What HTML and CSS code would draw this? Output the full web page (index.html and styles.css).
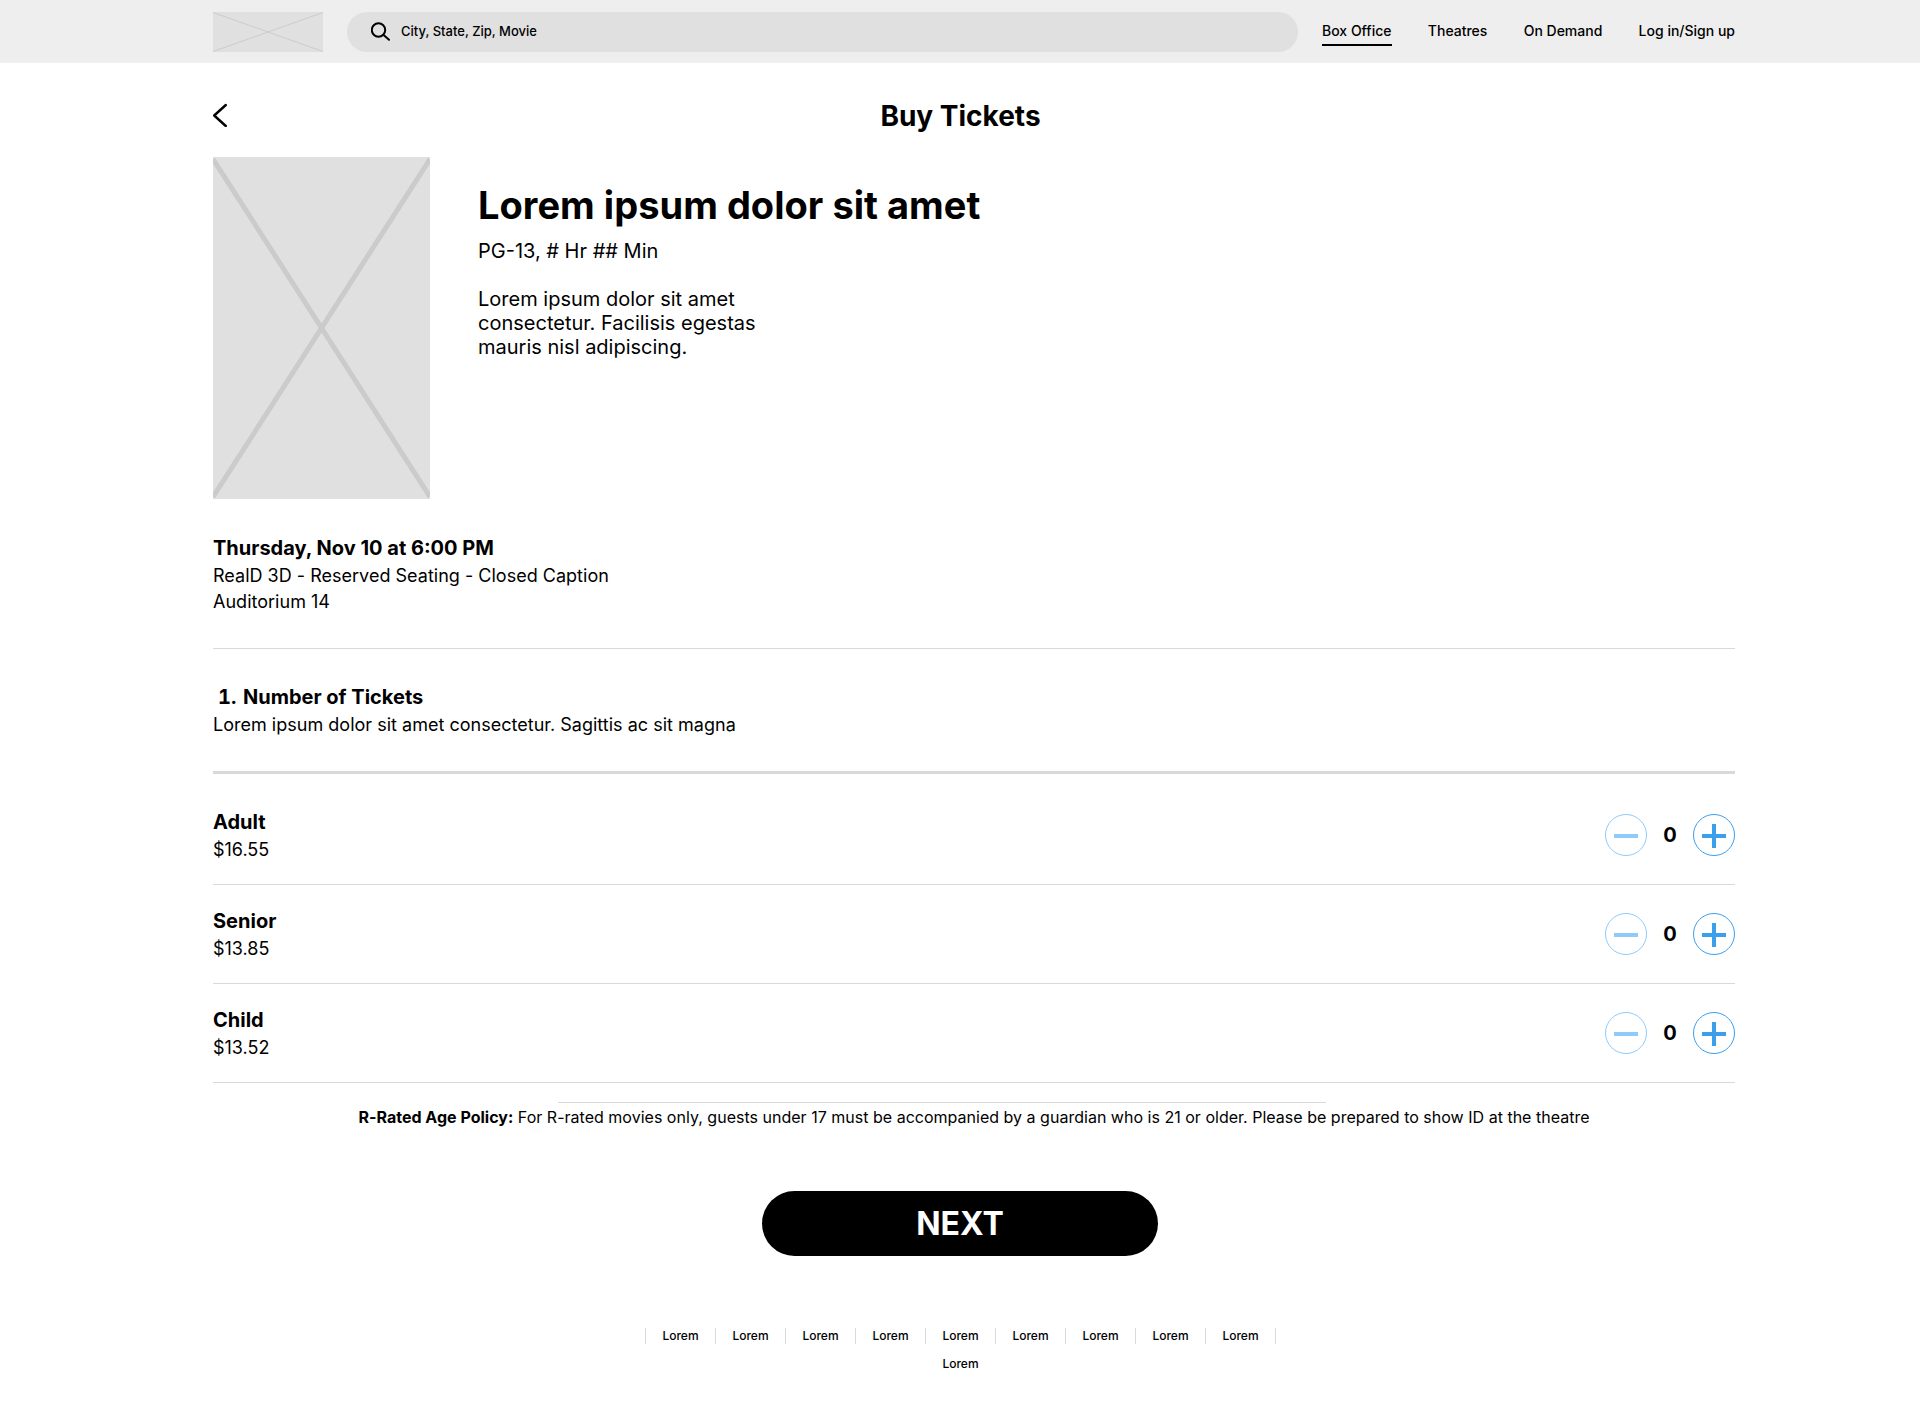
FILE: index.html
```html
<!DOCTYPE html>
<html lang="en">
<head>
<meta charset="utf-8">
<title>Buy Tickets</title>
<link rel="stylesheet" href="styles.css">
</head>
<body>
<header class="topbar">
  <svg class="logo" viewBox="0 0 110 40"><path d="M0 .5L110 39.5M110 .5L0 39.5"/></svg>
  <div class="search">
    <svg class="search-icon" viewBox="0 0 20 20"><circle cx="7.5" cy="8" r="6.7"/><path d="M12.3 12.8L18 17.8"/></svg>
    <span>City, State, Zip, Movie</span>
  </div>
  <nav class="nav">
    <a class="active">Box Office</a><a>Theatres</a><a>On Demand</a><a>Log in/Sign up</a>
  </nav>
</header>
<main class="page">
  <div class="heading">
    <svg class="back" viewBox="0 0 14 24"><path d="M12.8 2L1.2 12.5L12.8 23"/></svg>
    <h1>Buy Tickets</h1>
  </div>
  <section class="movie">
    <svg class="poster" viewBox="0 0 217 342"><path d="M0 2L217 340M217 2L0 340"/></svg>
    <div class="movie-info">
      <h2>Lorem ipsum dolor sit amet</h2>
      <p class="rating">PG-13, # Hr ## Min</p>
      <p class="summary">Lorem ipsum dolor sit amet<br>consectetur. Facilisis egestas<br>mauris nisl adipiscing.</p>
    </div>
  </section>
  <section class="showing">
    <h3>Thursday, Nov 10 at 6:00 PM</h3>
    <p>RealD 3D - Reserved Seating - Closed Caption</p>
    <p>Auditorium 14</p>
  </section>
  <section class="step">
    <h3><span class="step-number">1.</span>Number of Tickets</h3>
    <p>Lorem ipsum dolor sit amet consectetur. Sagittis ac sit magna</p>
  </section>
  <section class="tickets">
    <div class="ticket">
      <div><h3>Adult</h3><p>$16.55</p></div>
      <div class="stepper">
        <svg class="minus" viewBox="0 0 42 42"><circle cx="21" cy="21" r="20.5"/><path d="M9 22H33"/></svg>
        <span>0</span>
        <svg class="plus" viewBox="0 0 42 42"><circle cx="21" cy="21" r="20.5"/><path d="M9 22H33M21 10V34"/></svg>
      </div>
    </div>
    <div class="ticket">
      <div><h3>Senior</h3><p>$13.85</p></div>
      <div class="stepper">
        <svg class="minus" viewBox="0 0 42 42"><circle cx="21" cy="21" r="20.5"/><path d="M9 22H33"/></svg>
        <span>0</span>
        <svg class="plus" viewBox="0 0 42 42"><circle cx="21" cy="21" r="20.5"/><path d="M9 22H33M21 10V34"/></svg>
      </div>
    </div>
    <div class="ticket">
      <div><h3>Child</h3><p>$13.52</p></div>
      <div class="stepper">
        <svg class="minus" viewBox="0 0 42 42"><circle cx="21" cy="21" r="20.5"/><path d="M9 22H33"/></svg>
        <span>0</span>
        <svg class="plus" viewBox="0 0 42 42"><circle cx="21" cy="21" r="20.5"/><path d="M9 22H33M21 10V34"/></svg>
      </div>
    </div>
  </section>
  <div class="short-rule"></div>
  <p class="policy"><b>R-Rated Age Policy:</b> For R-rated movies only, guests under 17 must be accompanied by a guardian who is 21 or older. Please be prepared to show ID at the theatre</p>
</main>
<button class="next">NEXT</button>
<footer class="footer">
  <div class="links">
    <a>Lorem</a><a>Lorem</a><a>Lorem</a><a>Lorem</a><a>Lorem</a><a>Lorem</a><a>Lorem</a><a>Lorem</a><a>Lorem</a>
  </div>
  <a class="last">Lorem</a>
</footer>
</body>
</html>
```
FILE: styles.css
```css
* { box-sizing: border-box; margin: 0; padding: 0; }
body { background: #fff; color: #000; font-family: Inter, sans-serif; width: 1920px; height: 1421px; overflow: hidden; }
svg { display: block; flex: none; fill: none; }

.topbar { height: 63px; background: #eee; padding: 12px 185px 0 213px; display: flex; align-items: flex-start; }
.logo { width: 110px; height: 40px; background: #e0e0e0; stroke: #cbcbcb; }
.search { width: 951px; height: 40px; margin-left: 24px; padding: 0 0 2px 24px; border-radius: 20px; background: #e0e0e0; display: flex; align-items: center; gap: 10px; font-size: 13px; font-weight: 500; }
.search-icon { width: 20px; height: 20px; margin-top: 2px; stroke: #000; stroke-width: 2; stroke-linecap: round; }
.nav { flex: 1; margin-left: 24px; padding-top: 9px; display: flex; justify-content: space-between; font-size: 14px; font-weight: 500; line-height: 20px; white-space: nowrap; }
.nav a { height: 25px; }
.nav .active { border-bottom: 2px solid #000; }

.page { width: 1522px; margin-left: 213px; }
.heading { height: 94px; padding-top: 36px; display: flex; }
.back { width: 14px; height: 24px; margin-top: 4px; stroke: #000; stroke-width: 2.4; stroke-linecap: round; stroke-linejoin: round; }
h1 { width: 1495px; margin-left: -14px; font-size: 28px; line-height: 34px; text-align: center; }
.movie { display: flex; gap: 48px; }
.poster { width: 217px; height: 342px; background: #e0e0e0; stroke: #cbcbcb; stroke-width: 5; }
.movie-info { padding-top: 24px; font-size: 20px; line-height: 24px; }
h2 { font-size: 38px; line-height: 48px; letter-spacing: 0.03px; }
.rating { margin-top: 10px; }
.summary { margin-top: 24px; }

h3 { font-size: 20px; line-height: 24px; font-weight: 700; }
.showing, .step, .ticket { font-size: 18px; line-height: 26px; }
.showing { height: 150px; padding-top: 37px; border-bottom: 1px solid #d9d9d9; }
.showing h3, .step h3, .ticket h3 { margin-bottom: 3px; }
.showing p, .step p, .policy { letter-spacing: 0.014px; }
.step { height: 125px; padding-top: 36px; border-bottom: 3px solid #d9d9d9; }
.step-number { display: inline-block; width: 30px; padding-left: 5px; font-variant-numeric: tabular-nums; }
.ticket { height: 99px; padding-top: 24px; border-bottom: 1px solid #d9d9d9; display: flex; justify-content: space-between; }
.ticket:first-child { height: 111px; padding-top: 36px; }
.stepper { height: 42px; margin-top: 4px; display: flex; align-items: center; font-size: 20px; font-weight: 700; }
.stepper span { width: 46px; text-align: center; }
.stepper svg { width: 42px; height: 42px; }
.stepper path { stroke-width: 4; }
.minus { stroke: #8ecbfa; }
.plus { stroke: #3b9fec; }
.short-rule { width: 768px; height: 1px; margin: 19px 0 0 345px; background: #d9d9d9; }
.policy { margin-top: 4px; font-size: 16px; line-height: 20px; text-align: center; white-space: nowrap; }

.next { display: block; width: 396px; height: 65px; margin: 64px auto 0; border: 0; border-radius: 33px; background: #000; color: #fff; font: 700 32px/65px Inter, sans-serif; }
.footer { margin-top: 72px; display: flex; flex-direction: column; align-items: center; gap: 12px; font-size: 12px; font-weight: 500; line-height: 16px; }
.links { display: flex; border-left: 1px solid #d9d9d9; }
.links a { width: 70px; padding-left: 1px; border-right: 1px solid #d9d9d9; text-align: center; }
.last { padding-left: 1px; }
```
